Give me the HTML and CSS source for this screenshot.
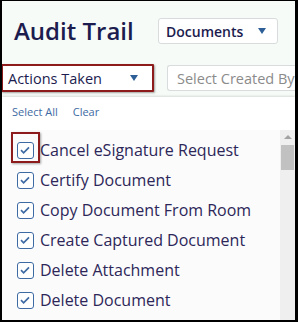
FILE: index.html
```html
<!DOCTYPE html>
<html lang="en">
<head>
  <meta charset="UTF-8" />
  <title>Audit Trail</title>
  <link rel="stylesheet" href="styles.css">
</head>
<body>
  <div class="page">
    <div class="top-row">
      <h1 class="title">Audit Trail</h1>
      <div class="select select-docs">
        <span>Documents</span>
        <span class="caret"></span>
      </div>
    </div>

    <div class="filter-row">
      <div class="select select-actions">
        <span>Actions Taken</span>
        <span class="caret"></span>
      </div>
      <div class="select select-created">
        <span>Select Created By</span>
      </div>
    </div>

    <div class="panel">
      <div class="panel-links">
        <a href="#">Select All</a>
        <a href="#">Clear</a>
      </div>
      <div class="list-wrap">
        <ul class="list">
          <li><span class="check first"><svg viewBox="0 0 16 16"><path d="M4 8.2l2.6 2.6L12 5.4"/></svg></span>Cancel eSignature Request</li>
          <li><span class="check"><svg viewBox="0 0 16 16"><path d="M4 8.2l2.6 2.6L12 5.4"/></svg></span>Certify Document</li>
          <li><span class="check"><svg viewBox="0 0 16 16"><path d="M4 8.2l2.6 2.6L12 5.4"/></svg></span>Copy Document From Room</li>
          <li><span class="check"><svg viewBox="0 0 16 16"><path d="M4 8.2l2.6 2.6L12 5.4"/></svg></span>Create Captured Document</li>
          <li><span class="check"><svg viewBox="0 0 16 16"><path d="M4 8.2l2.6 2.6L12 5.4"/></svg></span>Delete Attachment</li>
          <li><span class="check"><svg viewBox="0 0 16 16"><path d="M4 8.2l2.6 2.6L12 5.4"/></svg></span>Delete Document</li>
        </ul>
        <div class="scrollbar">
          <span class="arrow-up"></span>
          <span class="thumb"></span>
        </div>
      </div>
    </div>
  </div>
</body>
</html>
```

FILE: styles.css
```css
:root {
  --navy: #1c1c4f;
  --item: #2d2759;
  --blue: #3e6aa3;
  --red: #8e1b1b;
}
body {
  margin: 0;
  background: #000;
  font-family: 'Open Sans', sans-serif;
}
.page {
  width: 298px;
  height: 322px;
  box-sizing: border-box;
  border: 2px solid #000;
  border-top-width: 1px;
  border-right-width: 3px;
  background: #f7fbf7;
  overflow: hidden;
}
.top-row {
  display: flex;
  align-items: center;
  padding: 16px 0 0 12px;
  height: 28px;
}
.title {
  margin: 0 0 2px;
  font-size: 24px;
  font-weight: 600;
  color: var(--navy);
  width: 144px;
}
.select {
  display: flex;
  align-items: center;
  justify-content: space-between;
  box-sizing: border-box;
  background: #fff;
  border: 1px solid #d8dcdc;
  border-radius: 3px;
  color: var(--navy);
}
.select-docs {
  width: 120px;
  height: 26px;
  padding: 0 11px 0 7px;
  font-size: 14px;
  font-weight: 600;
}
.caret {
  width: 0;
  height: 0;
  border-left: 4px solid transparent;
  border-right: 4px solid transparent;
  border-top: 6px solid #2d5f96;
}
.filter-row {
  display: flex;
  align-items: center;
  gap: 13px;
  margin-top: 19px;
}
.select-actions {
  width: 153px;
  height: 28px;
  margin-left: -1px;
  padding: 0 14px 0 5px;
  border: 2px solid var(--red);
  border-radius: 1px;
  font-size: 14.5px;
  box-shadow: 1px 1px 2px rgba(0,0,0,0.35);
}
.select-created {
  flex: 1;
  min-width: 0;
  height: 26px;
  padding: 0 0 0 9px;
  font-size: 14.5px;
  color: #8b8b8b;
  border-right: none;
  border-radius: 3px 0 0 3px;
  white-space: nowrap;
  overflow: hidden;
}
.panel {
  margin-top: 5px;
  background: #fff;
  box-shadow: 0 -1px 2px rgba(0,0,0,0.12);
}
.panel-links {
  display: flex;
  gap: 15px;
  padding: 7px 0 0 10px;
  height: 26px;
  font-size: 11px;
}
.panel-links a {
  color: var(--blue);
  text-decoration: none;
}
.list-wrap {
  display: flex;
  background: #fbfbfb;
}
.list {
  flex: 1;
  list-style: none;
  margin: 0;
  padding: 5px 0 0 15px;
}
.list li {
  display: flex;
  align-items: center;
  gap: 6px;
  height: 30px;
  font-size: 16px;
  color: var(--item);
  white-space: nowrap;
}
.check {
  position: relative;
  flex: none;
  width: 17px;
  height: 17px;
  box-sizing: border-box;
  border: 1.5px solid var(--blue);
  border-radius: 3px;
  background: #fff;
}
.check svg {
  position: absolute;
  left: -1px;
  top: -1px;
  width: 16px;
  height: 16px;
  fill: none;
  stroke: var(--blue);
  stroke-width: 1.7;
}
.check.first::after {
  content: "";
  position: absolute;
  left: -7px;
  top: -11px;
  width: 25px;
  height: 27px;
  border: 2px solid var(--red);
  box-shadow: 1px 1px 2px rgba(0,0,0,0.35);
}
.scrollbar {
  width: 15px;
  background: #efefef;
  display: flex;
  flex-direction: column;
  align-items: center;
  padding-top: 5px;
  height: 200px;
}
.arrow-up {
  width: 0;
  height: 0;
  border-left: 4px solid transparent;
  border-right: 4px solid transparent;
  border-bottom: 4px solid #a3a3a3;
}
.thumb {
  margin-top: 6px;
  width: 13px;
  height: 25px;
  background: #c1c1c1;
}
```
